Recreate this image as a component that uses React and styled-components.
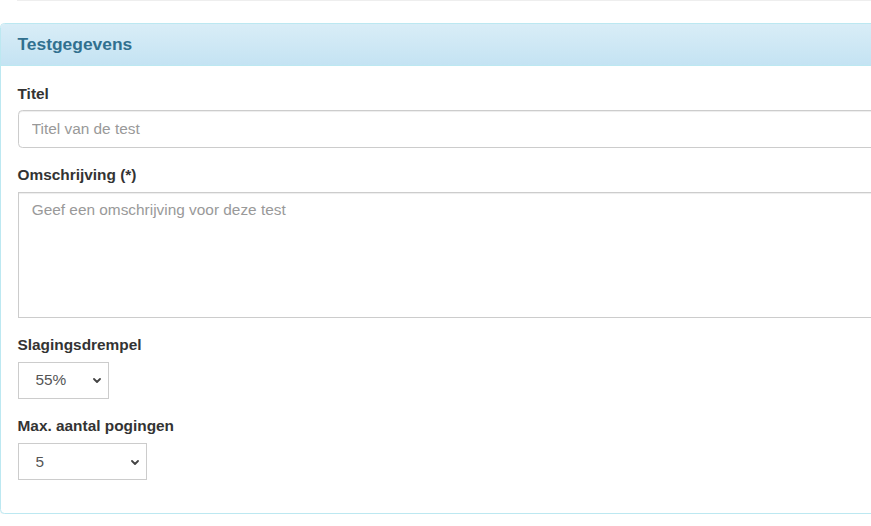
import React from "react";
import styled, { createGlobalStyle } from "styled-components";

const Global = createGlobalStyle`
  html, body { margin: 0; padding: 0; background: #fff; overflow: hidden; }
  body { font-family: "Liberation Sans", Arial, sans-serif; font-size: 15.4px; color: #333; }
  * { box-sizing: border-box; }
`;

const Page = styled.div`
  width: 940px;
`;

const TopRule = styled.div`
  height: 1px;
  margin-left: 17px;
  background: #eeeeee;
`;

const Panel = styled.section`
  margin-top: 22px;
  border: 1px solid #bce8f1;
  border-radius: 4.4px;
  background: #fff;
  box-shadow: 0 1px 2px rgba(0, 0, 0, 0.05);
`;

const PanelHeading = styled.div`
  padding: 11px 16.5px;
  border-bottom: 1px solid #bce8f1;
  border-radius: 3.4px 3.4px 0 0;
  background: linear-gradient(to bottom, #d9edf7 0%, #c4e3f3 100%);
  color: #31708f;
`;

const PanelTitle = styled.h3`
  margin: 0;
  font-size: 17.4px;
  font-weight: bold;
  line-height: 1.1;
`;

const PanelBody = styled.div`
  padding: 16.5px;
`;

const FormGroup = styled.div`
  margin-bottom: 16.5px;
`;

const Label = styled.label`
  display: block;
  margin-bottom: 5.5px;
  font-weight: bold;
  font-size: 15.4px;
  line-height: 22px;
  color: #333;
`;

const controlBase = `
  display: block;
  font-family: "Liberation Sans", Arial, sans-serif;
  font-size: 15.4px;
  line-height: 22px;
  color: #555;
  background: #fff;
  border: 1px solid #ccc;
  outline: none;
  &::placeholder { color: #999; opacity: 1; }
`;

const TextInput = styled.input`
  ${controlBase}
  width: 100%;
  height: 37.4px;
  padding: 6.6px 13.2px;
  border-radius: 4.4px;
  box-shadow: inset 0 1px 1px rgba(0, 0, 0, 0.075);
`;

const TextArea = styled.textarea`
  ${controlBase}
  width: 100%;
  height: 126px;
  padding: 6.6px 13.2px;
  border-radius: 0;
  resize: none;
  box-shadow: inset 0 1px 1px rgba(0, 0, 0, 0.075);
`;

const SelectWrap = styled.div`
  position: relative;
  width: ${(p) => p.$w}px;
`;

const Select = styled.select`
  ${controlBase}
  appearance: none;
  -webkit-appearance: none;
  width: 100%;
  height: 37.4px;
  padding: 6.6px 24px 6.6px 17px;
  border-radius: 0;
`;

const Chevron = styled.svg`
  position: absolute;
  right: 8px;
  top: 50%;
  margin-top: -2px;
  width: 8px;
  height: 5px;
  pointer-events: none;
`;

function Dropdown({ width, value, options }) {
  return (
    <SelectWrap $w={width}>
      <Select defaultValue={value}>
        {options.map((o) => (
          <option key={o} value={o}>
            {o}
          </option>
        ))}
      </Select>
      <Chevron viewBox="0 0 8 5">
        <path d="M1 1 L4 4 L7 1" fill="none" stroke="#444" strokeWidth="1.8" strokeLinecap="round" strokeLinejoin="round" />
      </Chevron>
    </SelectWrap>
  );
}

export default function App() {
  return (
    <Page>
      <Global />
      <TopRule />
      <Panel>
        <PanelHeading>
          <PanelTitle>Testgegevens</PanelTitle>
        </PanelHeading>
        <PanelBody>
          <FormGroup>
            <Label>Titel</Label>
            <TextInput placeholder="Titel van de test" />
          </FormGroup>
          <FormGroup>
            <Label>Omschrijving (*)</Label>
            <TextArea rows={5} placeholder="Geef een omschrijving voor deze test" />
          </FormGroup>
          <FormGroup>
            <Label>Slagingsdrempel</Label>
            <Dropdown
              width={91}
              value="55%"
              options={["50%", "55%", "60%", "65%", "70%", "75%", "80%"]}
            />
          </FormGroup>
          <FormGroup>
            <Label>Max. aantal pogingen</Label>
            <Dropdown
              width={129}
              value="5"
              options={["1", "2", "3", "4", "5", "Onbeperkt"]}
            />
          </FormGroup>
        </PanelBody>
      </Panel>
    </Page>
  );
}
